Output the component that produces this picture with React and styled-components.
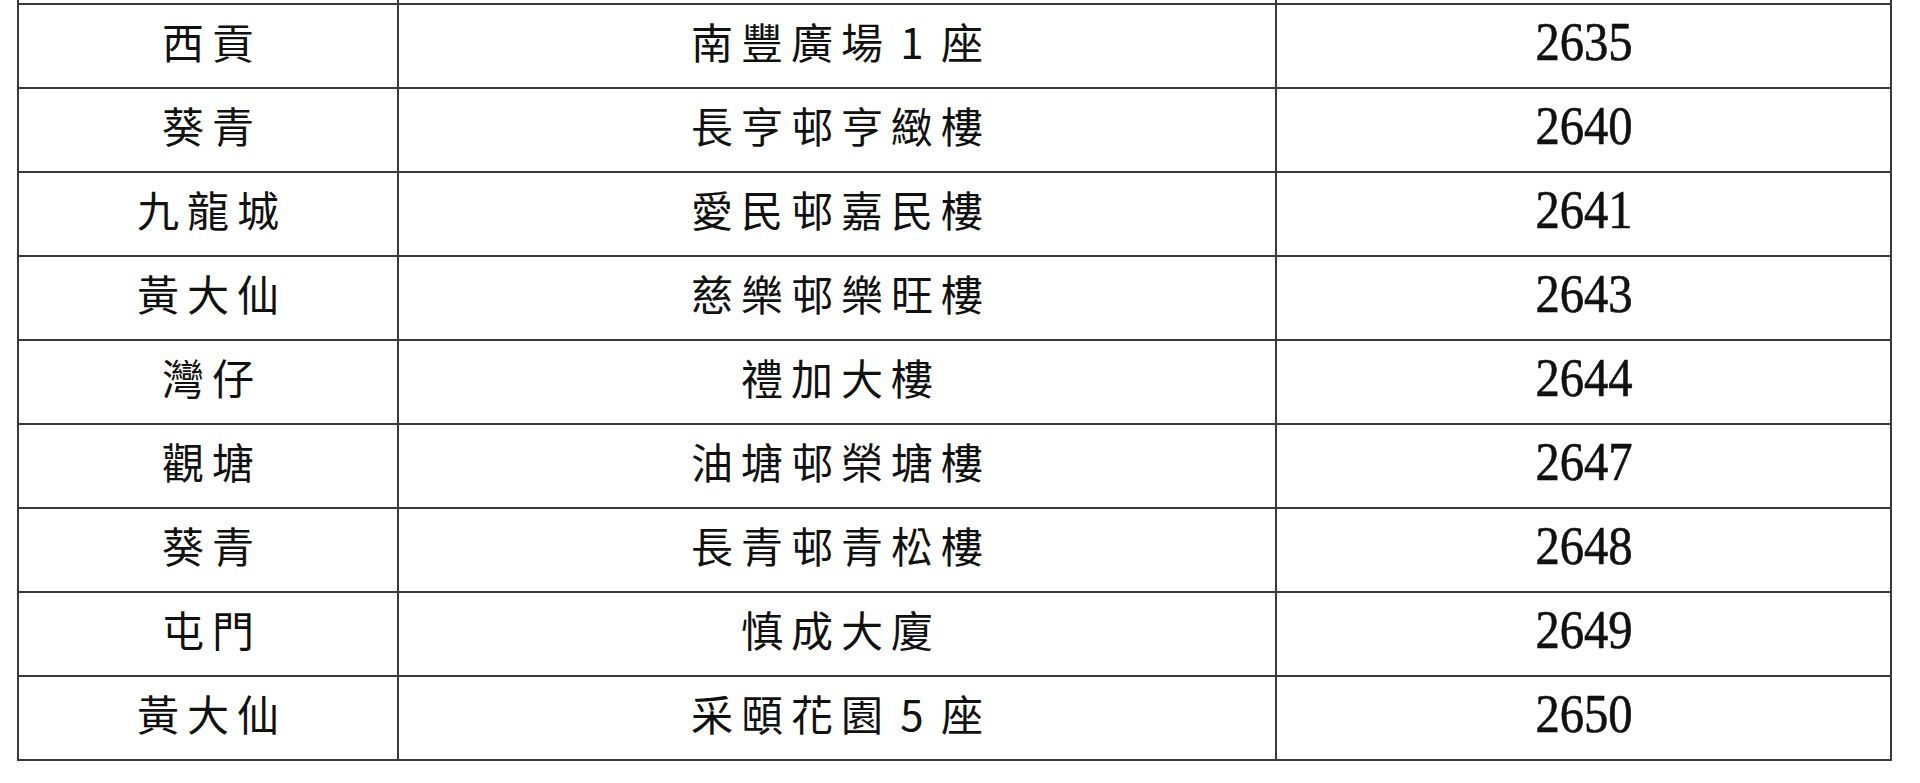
import React from "react";
import styled, { createGlobalStyle } from "styled-components";

const GlobalStyle = createGlobalStyle`
  html, body {
    margin: 0;
    padding: 0;
    background: #ffffff;
  }
`;

function createData(district, building, code) {
  return { district, building, code };
}

const rows = [
  createData("西貢", "南豐廣場 1 座", "2635"),
  createData("葵青", "長亨邨亨緻樓", "2640"),
  createData("九龍城", "愛民邨嘉民樓", "2641"),
  createData("黃大仙", "慈樂邨樂旺樓", "2643"),
  createData("灣仔", "禮加大樓", "2644"),
  createData("觀塘", "油塘邨榮塘樓", "2647"),
  createData("葵青", "長青邨青松樓", "2648"),
  createData("屯門", "慎成大廈", "2649"),
  createData("黃大仙", "采頤花園 5 座", "2650"),
];

const App = () => {
  return (
    <Page>
      <GlobalStyle />
      <Table>
        <colgroup>
          <col style={{ width: "380px" }} />
          <col style={{ width: "878px" }} />
          <col style={{ width: "615px" }} />
        </colgroup>
        <tbody>
          <StubRow>
            <td />
            <td />
            <td />
          </StubRow>
          {rows.map((r) => (
            <Row key={r.code}>
              <Cell>
                <ChineseText>{r.district}</ChineseText>
              </Cell>
              <Cell>
                <ChineseText>{r.building}</ChineseText>
              </Cell>
              <Cell>
                <Code>{r.code}</Code>
              </Cell>
            </Row>
          ))}
        </tbody>
      </Table>
    </Page>
  );
};

export default App;

const Page = styled.div`
  width: 1920px;
  height: 783px;
  overflow: hidden;
  padding-left: 17px;
  box-sizing: border-box;
  background: #ffffff;
`;

const Table = styled.table`
  border-collapse: collapse;
  table-layout: fixed;
  width: 1873px;
  color: #111111;
`;

const StubRow = styled.tr`
  height: 3px;
  td {
    height: 3px;
    padding: 0;
    font-size: 0;
    line-height: 0;
    border-left: 2px solid #3a3a3a;
    border-right: 2px solid #3a3a3a;
  }
`;

const Row = styled.tr`
  height: 84px;
`;

const Cell = styled.td`
  border: 2px solid #3a3a3a;
  padding: 0 0 9px 0;
  text-align: center;
  vertical-align: middle;
`;

const ChineseText = styled.span`
  display: inline-block;
  font-family: "Noto Sans CJK TC", "Noto Sans CJK SC", sans-serif;
  font-size: 42px;
  line-height: 1;
  letter-spacing: 8px;
  word-spacing: -8px;
  padding-left: 8px;
  font-weight: 400;
`;

const Code = styled.span`
  display: inline-block;
  font-family: "Liberation Serif", "Times New Roman", serif;
  font-size: 54px;
  line-height: 1;
  transform: scaleX(0.9);
  -webkit-text-stroke: 0.6px #111111;
`;
